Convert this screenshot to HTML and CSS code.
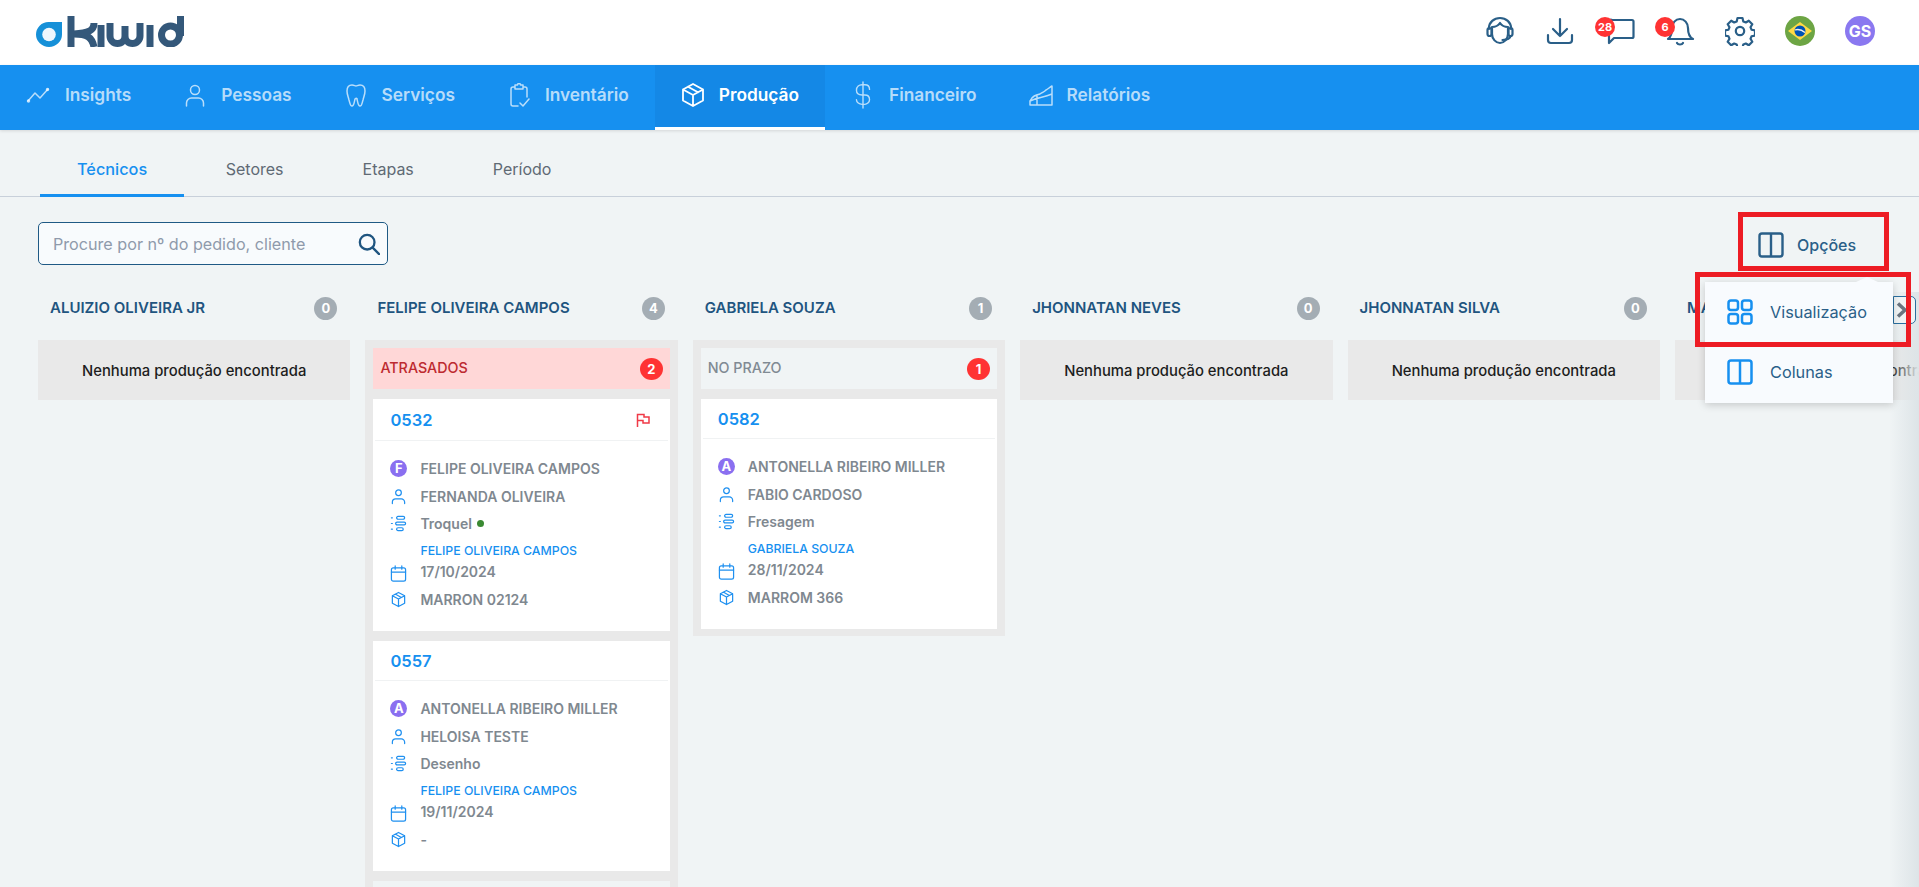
FILE: index.html
```html
<!DOCTYPE html>
<html lang="pt-BR">
<head>
<meta charset="utf-8">
<title>Kiwid - Produção</title>
<link rel="stylesheet" href="styles.css">
</head>
<body>
<header class="top">
  <div class="logo">
    <svg width="152" height="31" viewBox="0 0 150 31">
      <path d="M0 18.500A12.500 12.500 0 0 1 12.500 6H26v12.500A13 12.500 0 0 1 0 18.500z" fill="#1690d8"/>
      <circle cx="13" cy="18.500" r="6.800" fill="#eef6fd"/>
      <g fill="none" stroke="#34587a" stroke-width="7">
        <path d="M35 0v31"/>
        <path d="M58 7c0 8-6 10-20 11 13 0 18 3 20 13"/>
        <path d="M65 9v22"/>
        <path d="M74 7v13a7.500 7.500 0 0 0 15 0V10v10a7.500 7.500 0 0 0 15 0V7"/>
        <path d="M114 9v22"/>
        <circle cx="134.500" cy="19" r="9"/>
        <path d="M144.500 0v20"/>
      </g>
    </svg>
  </div>
  <div class="tools">
    <svg class="tool" viewBox="0 0 30 30"><path d="M4 13v-1a11 10 0 0 1 22 0v1M7 11c3 0 6-1 8-4 2 3 5 4 8 4v7c0 5-4 9-8 9s-8-4-8-9z"/><rect x="2.500" y="12" width="4" height="8" rx="2"/><rect x="23.500" y="12" width="4" height="8" rx="2"/><path d="M25.500 20c0 2-3 4-8 4"/></svg>
    <svg class="tool" viewBox="0 0 30 30"><path d="M15 3v17M8 13l7 7 7-7M3 19v5a3 3 0 0 0 3 3h18a3 3 0 0 0 3-3v-5"/></svg>
    <div class="tool-wrap">
      <svg class="tool" viewBox="0 0 30 30"><path d="M7 4h20a1.500 1.500 0 0 1 1.500 1.500v15a1.500 1.500 0 0 1-1.500 1.500H9l-5 5V6a2 2 0 0 1 3-2z"/></svg>
      <span class="tool-badge">28</span>
    </div>
    <div class="tool-wrap">
      <svg class="tool" viewBox="0 0 30 30"><path d="M3 23c3-2 4-5 4-11a8 9 0 0 1 16 0c0 6 1 9 5 11zM12 27c1 2 5 2 6 0"/></svg>
      <span class="tool-badge">6</span>
    </div>
    <svg class="tool" viewBox="0 0 30 30"><circle cx="15" cy="15" r="4.200"/><path d="M12.500 2h5l.8 3.500 2.500 1 3-1.800 3.500 3.500-1.800 3 1 2.500 3.500.8v5l-3.500.8-1 2.500 1.800 3-3.500 3.500-3-1.800-2.500 1-.8 3.500h-5l-.8-3.500-2.500-1-3 1.800-3.500-3.500 1.800-3-1-2.500-3.500-.8v-5l3.500-.8 1-2.500-1.800-3 3.500-3.500 3 1.800 2.500-1z"/></svg>
    <svg class="flag" viewBox="0 0 30 30"><circle cx="15" cy="15" r="15" fill="#6da544"/><path d="M15 6l12 9-12 9-12-9z" fill="#ffda44"/><circle cx="15" cy="15" r="5.500" fill="#0052b4"/><path d="M10 14c3-1 7 0 10 2.500" stroke="#f0f0f0" stroke-width="1.300" fill="none"/></svg>
    <span class="avatar-top">GS</span>
  </div>
</header>

<nav class="mainnav">
  <a class="nav-item"><svg class="nav-ic" viewBox="0 0 24 24"><path d="M2 18l7-8 5 5 8-9"/><circle cx="2.500" cy="18" r="1"/><circle cx="21.500" cy="6.500" r="1"/></svg>Insights</a>
  <a class="nav-item"><svg class="nav-ic" viewBox="0 0 24 24"><circle cx="12" cy="7" r="4.500"/><path d="M3.500 23v-3a5 5 0 0 1 5-5h7a5 5 0 0 1 5 5v3"/></svg>Pessoas</a>
  <a class="nav-item"><svg class="nav-ic" viewBox="0 0 24 24"><path d="M8 2c2 0 3 1 4 1s2-1 4-1c3 0 5 2 5 6 0 3-1 5-2 9-1 3-1 6-3 6s-2-3-3-7c0-1-1-1-2 0-1 4-1 7-3 7s-2-3-3-6C4 13 3 11 3 8c0-4 2-6 5-6z"/></svg>Serviços</a>
  <a class="nav-item"><svg class="nav-ic" viewBox="0 0 24 24"><path d="M8 4H6a2 2 0 0 0-2 2v15a2 2 0 0 0 2 2h5M16 4h2a2 2 0 0 1 2 2v8M8 2h2.500a1.500 1.500 0 0 1 3 0H16v4H8zM13 20l3 3 6-7"/></svg>Inventário</a>
  <a class="nav-item active"><svg class="nav-ic" viewBox="0 0 24 24"><path d="M12 1l10 5.500v11L12 23 2 17.500v-11zM2 6.500L12 12l10-5.500M12 12v11M7 3.800l10 5.500"/></svg>Produção</a>
  <a class="nav-item"><svg class="nav-ic ic-tall" viewBox="0 0 24 30"><path d="M12 1v28M19 9c0-3-2-5-5-5h-3C8 4 5 6 5 10s3 5 6 5h3c3 0 5 2 5 5s-3 5-5 5h-3c-3 0-6-2-6-5"/></svg>Financeiro</a>
  <a class="nav-item"><svg class="nav-ic" viewBox="0 0 24 24"><path d="M8 22V12M23 3v19H1v-4c2-5 6-6 10-7 3-2 4-2 6-4 2-1 4-3 6-4zM1 18c7-4 13-3 22-7"/></svg>Relatórios</a>
</nav>

<div class="tabs">
  <a class="tab active">Técnicos</a>
  <a class="tab">Setores</a>
  <a class="tab">Etapas</a>
  <a class="tab">Período</a>
</div>

<main class="board-area">
  <div class="toolbar">
    <div class="search">
      <span class="placeholder">Procure por nº do pedido, cliente</span>
      <svg class="search-ic" viewBox="0 0 24 24"><circle cx="10" cy="10" r="8"/><path d="M16 16l7 7"/></svg>
    </div>
    <div class="options">
      <svg class="opt-ic" viewBox="0 0 26 26"><rect x="1.500" y="1.500" width="23" height="23" rx="2.500"/><path d="M13 1.500v23"/></svg>
      <span>Opções</span>
    </div>
  </div>

  <div class="board">
    <section class="col">
      <div class="col-head"><h2>ALUIZIO OLIVEIRA JR</h2><span class="count">0</span></div>
      <div class="empty">Nenhuma produção encontrada</div>
    </section>

    <section class="col">
      <div class="col-head"><h2>FELIPE OLIVEIRA CAMPOS</h2><span class="count">4</span></div>
      <div class="col-body">
        <div class="group late"><span>ATRASADOS</span><span class="red-badge">2</span></div>
        <article class="card flagged">
          <div class="card-title"><span>0532</span>
            <svg class="flag-ic" viewBox="0 0 14 14"><path d="M1.500 14V1.500h6.500v2.500h5v6H7V7.500H1.500"/></svg>
          </div>
          <div class="card-body">
            <div class="row"><span class="letter">F</span><span>FELIPE OLIVEIRA CAMPOS</span></div>
            <div class="row"><svg class="ic" viewBox="0 0 18 18"><use href="#i-user"/></svg><span>FERNANDA OLIVEIRA</span></div>
            <div class="row"><svg class="ic" viewBox="0 0 18 18"><use href="#i-steps"/></svg><span>Troquel</span><i class="dot"></i></div>
            <div class="row date"><svg class="ic" viewBox="0 0 18 18"><use href="#i-cal"/></svg><div class="date-text"><small>FELIPE OLIVEIRA CAMPOS</small><span>17/10/2024</span></div></div>
            <div class="row"><svg class="ic" viewBox="0 0 18 18"><use href="#i-box"/></svg><span>MARRON 02124</span></div>
          </div>
        </article>
        <article class="card">
          <div class="card-title"><span>0557</span></div>
          <div class="card-body">
            <div class="row"><span class="letter">A</span><span>ANTONELLA RIBEIRO MILLER</span></div>
            <div class="row"><svg class="ic" viewBox="0 0 18 18"><use href="#i-user"/></svg><span>HELOISA TESTE</span></div>
            <div class="row"><svg class="ic" viewBox="0 0 18 18"><use href="#i-steps"/></svg><span>Desenho</span></div>
            <div class="row date"><svg class="ic" viewBox="0 0 18 18"><use href="#i-cal"/></svg><div class="date-text"><small>FELIPE OLIVEIRA CAMPOS</small><span>19/11/2024</span></div></div>
            <div class="row"><svg class="ic" viewBox="0 0 18 18"><use href="#i-box"/></svg><span>-</span></div>
          </div>
        </article>
        <div class="group next"></div>
      </div>
    </section>

    <section class="col">
      <div class="col-head"><h2>GABRIELA SOUZA</h2><span class="count">1</span></div>
      <div class="col-body">
        <div class="group ontime"><span>NO PRAZO</span><span class="red-badge">1</span></div>
        <article class="card">
          <div class="card-title"><span>0582</span></div>
          <div class="card-body">
            <div class="row"><span class="letter">A</span><span>ANTONELLA RIBEIRO MILLER</span></div>
            <div class="row"><svg class="ic" viewBox="0 0 18 18"><use href="#i-user"/></svg><span>FABIO CARDOSO</span></div>
            <div class="row"><svg class="ic" viewBox="0 0 18 18"><use href="#i-steps"/></svg><span>Fresagem</span></div>
            <div class="row date"><svg class="ic" viewBox="0 0 18 18"><use href="#i-cal"/></svg><div class="date-text"><small>GABRIELA SOUZA</small><span>28/11/2024</span></div></div>
            <div class="row"><svg class="ic" viewBox="0 0 18 18"><use href="#i-box"/></svg><span>MARROM 366</span></div>
          </div>
        </article>
      </div>
    </section>

    <section class="col">
      <div class="col-head"><h2>JHONNATAN NEVES</h2><span class="count">0</span></div>
      <div class="empty">Nenhuma produção encontrada</div>
    </section>

    <section class="col">
      <div class="col-head"><h2>JHONNATAN SILVA</h2><span class="count">0</span></div>
      <div class="empty">Nenhuma produção encontrada</div>
    </section>

    <section class="col">
      <div class="col-head"><h2>MARCOS</h2><span class="count">0</span></div>
      <div class="empty">Nenhuma produção encontrada</div>
    </section>
  </div>

  <div class="edge-shade"></div>
  <button class="next-btn" aria-label="Próximo"><svg viewBox="0 0 12 16"><path d="M2 1.500L9 8l-7 6.500"/></svg></button>

  <div class="menu">
    <div class="menu-item"><svg class="menu-ic" viewBox="0 0 26 26"><rect x="1.500" y="1.500" width="9.500" height="9.500" rx="2.500"/><rect x="15" y="1.500" width="9.500" height="9.500" rx="2.500"/><rect x="1.500" y="15" width="9.500" height="9.500" rx="2.500"/><rect x="15" y="15" width="9.500" height="9.500" rx="2.500"/></svg>Visualização</div>
    <div class="menu-item"><svg class="menu-ic" viewBox="0 0 26 26"><rect x="1.500" y="1.500" width="23" height="23" rx="2.500"/><path d="M13 1.500v23"/></svg>Colunas</div>
  </div>
  <div class="mark mark-options"></div>
  <div class="mark mark-view"></div>
</main>

<svg class="defs" width="0" height="0" aria-hidden="true">
  <symbol id="i-user" viewBox="0 0 18 18"><circle cx="9" cy="5" r="3"/><path d="M2.500 16.500v-1.500a3.500 3.500 0 0 1 3.500-3.500h6a3.500 3.500 0 0 1 3.500 3.500v1.500"/></symbol>
  <symbol id="i-steps" viewBox="0 0 18 18"><path d="M1.500 3h1M1.500 9h1M1.500 15h1"/><rect x="7" y="1.500" width="8.500" height="3" rx="1.500"/><rect x="6" y="7.500" width="10.500" height="3" rx="1.500"/><rect x="7" y="13.500" width="7" height="3" rx="1.500"/></symbol>
  <symbol id="i-cal" viewBox="0 0 18 18"><rect x="1.500" y="3" width="15" height="14" rx="2"/><path d="M1.500 7.500h15M5.500 1v3.500M12.500 1v3.500"/></symbol>
  <symbol id="i-box" viewBox="0 0 18 18"><path d="M9 1.500l6.500 3.500v8L9 16.500 2.500 13V5zM2.500 5L9 8.500 15.500 5M9 8.500v8M5.500 3.200L12 6.800"/></symbol>
</svg>
</body>
</html>
```

FILE: styles.css
```css
* { box-sizing: border-box; }
html, body { margin: 0; height: 100%; }
body {
  width: 1919px;
  height: 887px;
  overflow: hidden;
  background: #f0f4f5;
  font-family: Inter, "Liberation Sans", sans-serif;
  color: #1f5580;
}

/* header */
.top {
  height: 65px;
  background: #fff;
  display: flex;
  align-items: center;
  justify-content: space-between;
  padding: 0 44px 3px 35px;
}
.logo svg { display: block; }
.tools { display: flex; align-items: center; gap: 30px; }
.tool {
  width: 30px;
  height: 30px;
  display: block;
  fill: none;
  stroke: #2a5f88;
  stroke-width: 2.200;
  stroke-linecap: round;
  stroke-linejoin: round;
}
.tool-wrap { position: relative; }
.tool-badge {
  position: absolute;
  top: 1px;
  left: -10px;
  height: 20px;
  min-width: 20px;
  border-radius: 10px;
  background: #ff3333;
  color: #fff;
  font-size: 11px;
  font-weight: 700;
  line-height: 20px;
  text-align: center;
}
.flag { width: 30px; height: 30px; display: block; }
.avatar-top {
  width: 30px;
  height: 30px;
  border-radius: 50%;
  background: #8a78f0;
  color: #fff;
  font-size: 16px;
  font-weight: 700;
  line-height: 30px;
  text-align: center;
}

/* main nav */
.mainnav {
  height: 65px;
  background: #1690f0;
  display: flex;
  box-shadow: 0 1px 3px rgba(0, 0, 0, .12);
  position: relative;
}
.nav-item {
  display: flex;
  align-items: center;
  gap: 14px;
  height: 65px;
  padding: 0 26px 6px;
  color: rgba(255, 255, 255, .7);
  font-size: 17.300px;
  font-weight: 600;
}
.nav-item:first-child { gap: 15px; }
.nav-ic {
  width: 24px;
  height: 24px;
  fill: none;
  stroke: rgba(255, 255, 255, .7);
  stroke-width: 1.500;
  stroke-linecap: round;
  stroke-linejoin: round;
  flex: none;
}
.ic-tall { height: 28px; }
.nav-item.active {
  background: #1488e6;
  color: #fff;
  border-bottom: 3px solid #fff;
  padding-bottom: 3px;
}
.nav-item.active .nav-ic { stroke: #fff; stroke-width: 1.800; }

/* tabs */
.tabs {
  height: 67px;
  display: flex;
  padding-left: 40px;
  border-bottom: 1px solid #c8d0da;
}
.tab {
  height: 67px;
  display: flex;
  align-items: center;
  padding: 11px 39.500px 0;
  font-size: 16px;
  color: #5f6a74;
}
.tab.active {
  color: #1690f0;
  font-size: 16.300px;
  font-weight: 500;
  border-bottom: 3px solid #1690f0;
  padding: 14px 37px 0;
  margin-right: 2px;
}

/* toolbar */
.board-area { position: relative; height: 690px; overflow: hidden; }
.toolbar {
  display: flex;
  justify-content: space-between;
  align-items: flex-start;
  height: 71px;
  padding: 25px 31px 0 38px;
}
.search {
  width: 350px;
  height: 43px;
  display: flex;
  align-items: center;
  justify-content: space-between;
  border: 1px solid #1f5a85;
  border-radius: 5px;
  background: #f8fbfd;
  padding: 0 7px 0 14px;
}
.placeholder { font-size: 16.150px; color: #8f9aab; }
.search-ic {
  width: 22px;
  height: 22px;
  fill: none;
  stroke: #1f5580;
  stroke-width: 2.500;
  stroke-linecap: round;
}
.options {
  display: flex;
  align-items: center;
  width: 140px;
  height: 46px;
  padding-left: 10px;
  font-size: 16px;
  font-weight: 500;
  color: #2a5f88;
}
.opt-ic {
  width: 26px;
  height: 26px;
  fill: none;
  stroke: #2a5f88;
  stroke-width: 2.400;
  margin-right: 13px;
}

/* board */
.board {
  display: flex;
  gap: 15px;
  padding: 20px 0 0 38px;
}
.col { flex: 0 0 312.400px; }
.col-head {
  height: 52px;
  display: flex;
  align-items: flex-start;
  justify-content: space-between;
  padding: 0 13px 0 12px;
}
.col-head h2 {
  margin: 0;
  padding-top: 9px;
  font-size: 15px;
  line-height: 22px;
  font-weight: 600;
  color: #1f5580;
  white-space: nowrap;
}
.count {
  width: 23px;
  height: 23px;
  margin-top: 9px;
  border-radius: 50%;
  background: #a4adb4;
  color: #fff;
  font-size: 13px;
  font-weight: 700;
  line-height: 23px;
  text-align: center;
  flex: none;
}
.empty {
  height: 60px;
  padding-top: 2px;
  background: #e9e9e9;
  display: flex;
  align-items: center;
  justify-content: center;
  font-size: 14.800px;
  font-weight: 500;
  color: #1d1d1d;
  white-space: nowrap;
}
.col-body { background: #e9e9e9; padding: 8px 8px 7px; }
.group {
  height: 41px;
  display: flex;
  align-items: center;
  justify-content: space-between;
  padding: 0 7px;
  font-size: 14.300px;
  font-weight: 500;
  margin-bottom: 10px;
}
.group > span:first-child { margin-bottom: 2px; }
.late { background: #ffd7d7; color: #bd2a30; }
.ontime { background: #f0f4f5; color: #808a93; }
.next { background: #f0f4f5; margin: 0; height: 60px; }
.red-badge {
  width: 23px;
  height: 22px;
  border-radius: 50%;
  background: #ff3333;
  color: #fff;
  font-size: 13px;
  font-weight: 700;
  line-height: 22px;
  text-align: center;
}
.card { background: #fff; height: 230px; padding: 0 2px; margin-bottom: 10px; }
.col-body > .card:last-child { margin-bottom: 0; }
.flagged { height: 232px; }
.card-title {
  height: 40px;
  display: flex;
  align-items: center;
  justify-content: space-between;
  padding: 0 18px 0 15px;
  border-bottom: 1px solid #f0f2f3;
  font-size: 16.500px;
  font-weight: 600;
  color: #1690f0;
}
.flagged .card-title { height: 42px; }
.flag-ic {
  width: 14px;
  height: 14px;
  fill: none;
  stroke: #f03a47;
  stroke-width: 1.500;
}
.card-body { padding: 14px 0 0 15px; }
.row {
  height: 27.500px;
  display: flex;
  align-items: center;
  font-size: 14px;
  font-weight: 600;
  color: #7f8890;
  white-space: nowrap;
}
.letter {
  width: 17px;
  height: 17px;
  border-radius: 50%;
  background: #8a6ff0;
  color: #fff;
  font-size: 13px;
  font-weight: 700;
  line-height: 17px;
  text-align: center;
  margin-right: 13px;
  flex: none;
}
.ic {
  width: 17px;
  height: 17px;
  fill: none;
  stroke: #1f90f0;
  stroke-width: 1.300;
  stroke-linecap: round;
  stroke-linejoin: round;
  margin-right: 13px;
  flex: none;
}
.dot {
  width: 7px;
  height: 7px;
  border-radius: 50%;
  background: #3a8a32;
  margin-left: 5px;
}
.row.date { height: 48px; align-items: flex-end; padding-bottom: 5px; }
.row.date .ic { margin-bottom: -1px; }
.date-text { display: flex; flex-direction: column; }
.date-text small { font-size: 12.300px; font-weight: 500; color: #1690f0; line-height: 16px; margin-bottom: 3px; }
.date-text span { line-height: 19px; }
.defs { position: absolute; }

/* overlays */
.edge-shade {
  position: absolute;
  top: 95px;
  right: 0;
  width: 30px;
  bottom: 0;
  background: linear-gradient(to right, rgba(221, 228, 231, 0), #dde4e7);
}
.next-btn {
  position: absolute;
  left: 1893px;
  top: 99px;
  width: 23px;
  height: 28px;
  padding: 0 6px 0 0;
  background: #f0f4f5;
  border: 1px solid #2a6f9f;
  border-radius: 0 5px 5px 0;
  display: flex;
  align-items: center;
  justify-content: center;
}
.next-btn svg {
  width: 12px;
  height: 16px;
  fill: none;
  stroke: #6b7580;
  stroke-width: 3.500;
}
.menu {
  position: absolute;
  left: 1705px;
  top: 85px;
  width: 188px;
  height: 121px;
  background: #f8fbfe;
  box-shadow: 0 2px 8px rgba(0, 0, 0, .18);
}
.menu::before {
  content: "";
  position: absolute;
  left: 151px;
  top: -5px;
  border-left: 11px solid transparent;
  border-right: 11px solid transparent;
  border-bottom: 5px solid #f8fbfe;
}
.menu-item {
  height: 60px;
  display: flex;
  align-items: center;
  padding-left: 22px;
  font-size: 16.300px;
  color: #2a5f88;
}
.menu-ic {
  width: 26px;
  height: 26px;
  fill: none;
  stroke: #1690f0;
  stroke-width: 2.500;
  margin-right: 17px;
}
.mark { position: absolute; border: 5px solid #ed1c24; }
.mark-options { left: 1738px; top: 15px; width: 151px; height: 59px; }
.mark-view { left: 1695px; top: 75px; width: 216px; height: 75px; }
```
